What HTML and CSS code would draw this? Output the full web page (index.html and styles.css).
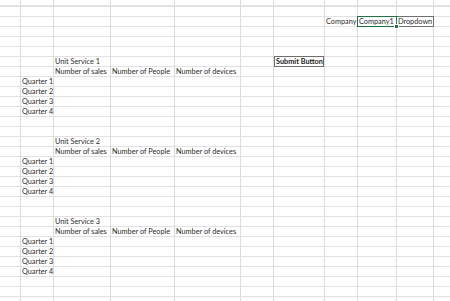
FILE: index.html
```html
<!DOCTYPE html>
<html>
<head>
<meta charset="utf-8">
<link rel="stylesheet" href="styles.css">
</head>
<body>
<div class="sheet">
  <div class="col c1"></div>
  <div class="col c2"></div>
  <div class="col c3"></div>
  <div class="col c4"></div>
  <div class="col c5"></div>
  <div class="col c6"></div>
  <div class="col c7"></div>
  <div class="col c8"></div>
  <div class="col c9"></div>
  <div class="col c10"></div>
  <div class="col c11 last"></div>

  <div class="cell c8 r3">Company</div>
  <div class="cell c9 r3 selected">Company1<span class="handle"></span></div>
  <div class="cell c10 r3 boxed">Dropdown</div>

  <div class="cell c7 r7 boxed bold">Submit Button</div>

  <div class="cell c3 r7">Unit Service 1</div>
  <div class="cell c3 r8">Number of sales</div>
  <div class="cell c4 r8">Number of People</div>
  <div class="cell c5 r8">Number of devices</div>
  <div class="cell c2 r9">Quarter 1</div>
  <div class="cell c2 r10">Quarter 2</div>
  <div class="cell c2 r11">Quarter 3</div>
  <div class="cell c2 r12">Quarter 4</div>

  <div class="cell c3 r15">Unit Service 2</div>
  <div class="cell c3 r16">Number of sales</div>
  <div class="cell c4 r16">Number of People</div>
  <div class="cell c5 r16">Number of devices</div>
  <div class="cell c2 r17">Quarter 1</div>
  <div class="cell c2 r18">Quarter 2</div>
  <div class="cell c2 r19">Quarter 3</div>
  <div class="cell c2 r20">Quarter 4</div>

  <div class="cell c3 r23">Unit Service 3</div>
  <div class="cell c3 r24">Number of sales</div>
  <div class="cell c4 r24">Number of People</div>
  <div class="cell c5 r24">Number of devices</div>
  <div class="cell c2 r25">Quarter 1</div>
  <div class="cell c2 r26">Quarter 2</div>
  <div class="cell c2 r27">Quarter 3</div>
  <div class="cell c2 r28">Quarter 4</div>
</div>
</body>
</html>
```

FILE: styles.css
```css
html, body {
  margin: 0;
  padding: 0;
  background: #ffffff;
  overflow: hidden;
}

.sheet {
  width: 450px;
  height: 301px;
  display: grid;
  grid-template-columns: 21px 33px 57px 64px 66px 33px 51px 33px 39px 37px 1fr;
  grid-template-rows: 6px repeat(30, 10px);
  background-image: repeating-linear-gradient(to bottom, #e1e1e1 0 1px, transparent 1px 10px);
  background-position: 0 6px;
  background-repeat: repeat-y;
  font-family: Lato, "Liberation Sans", sans-serif;
  font-size: 7.3px;
  color: #2b2b2b;
  overflow: hidden;
}

.col {
  grid-row: 1 / -1;
  border-right: 1px solid #dcdcdc;
}
.col.last { border-right: none; }

.c1 { grid-column: 1; }
.c2 { grid-column: 2; }
.c3 { grid-column: 3; }
.c4 { grid-column: 4; }
.c5 { grid-column: 5; }
.c6 { grid-column: 6; }
.c7 { grid-column: 7; }
.c8 { grid-column: 8; }
.c9 { grid-column: 9; }
.c10 { grid-column: 10; }
.c11 { grid-column: 11; }

.r3 { grid-row: 3; }
.r7 { grid-row: 7; }
.r8 { grid-row: 8; }
.r9 { grid-row: 9; }
.r10 { grid-row: 10; }
.r11 { grid-row: 11; }
.r12 { grid-row: 12; }
.r15 { grid-row: 15; }
.r16 { grid-row: 16; }
.r17 { grid-row: 17; }
.r18 { grid-row: 18; }
.r19 { grid-row: 19; }
.r20 { grid-row: 20; }
.r23 { grid-row: 23; }
.r24 { grid-row: 24; }
.r25 { grid-row: 25; }
.r26 { grid-row: 26; }
.r27 { grid-row: 27; }
.r28 { grid-row: 28; }

.cell {
  box-sizing: border-box;
  height: 11px;
  padding: 1px 0 0 1px;
  line-height: 10px;
  white-space: nowrap;
  position: relative;
}

.boxed {
  border: 1px solid #6e6e6e;
  padding: 0 0 0 1px;
  background: #ffffff;
  z-index: 1;
}

.c10.boxed { margin-left: -1px; }
.c7.boxed { margin-right: 1px; }

.bold { font-weight: 700; color: #1a1a1a; }

.selected {
  border: 1px solid #217346;
  padding: 0 0 0 1px;
  margin-left: -1px;
  background: #ffffff;
  z-index: 2;
}

.handle {
  position: absolute;
  right: -3px;
  bottom: -3px;
  width: 3px;
  height: 3px;
  background: #217346;
  border: 1px solid #ffffff;
}
```
